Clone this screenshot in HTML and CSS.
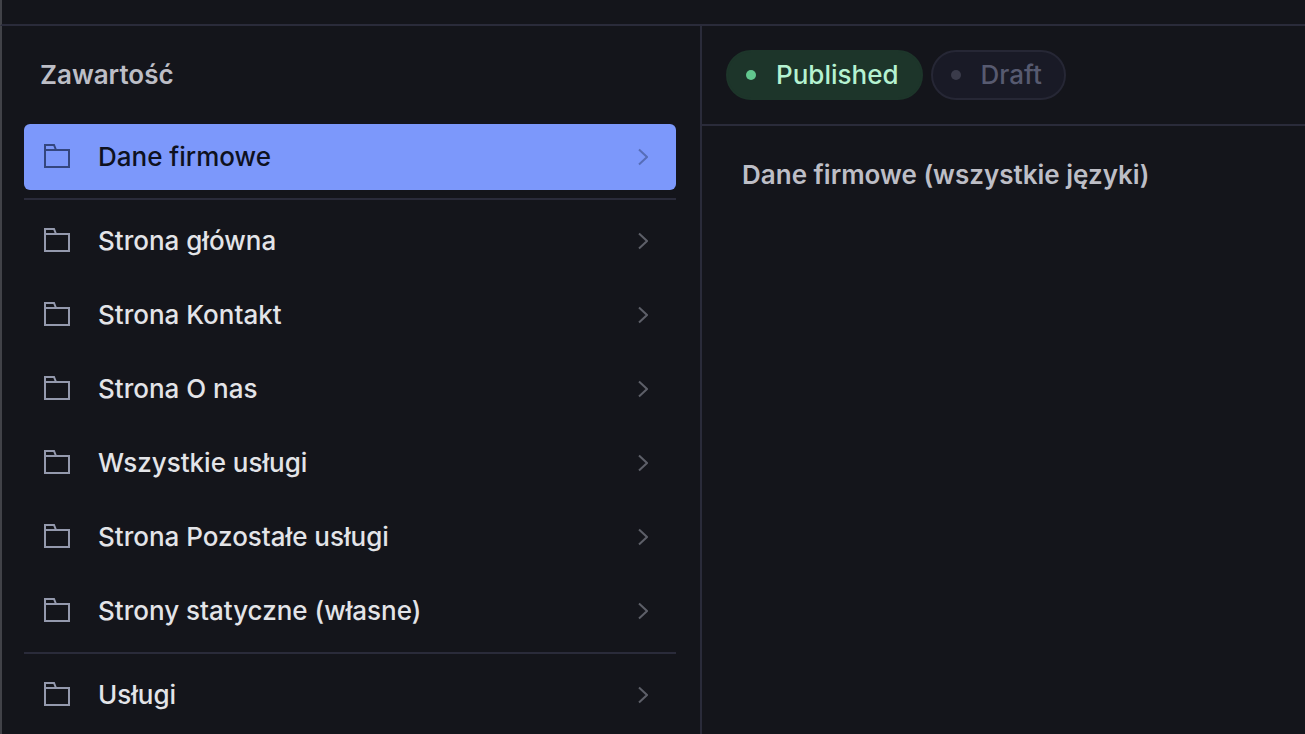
FILE: index.html
```html
<!DOCTYPE html>
<html lang="pl">
<head>
    <meta charset="UTF-8">
    <meta name="viewport" content="width=device-width, initial-scale=1.0">
    <title>Zawartość</title>
    <link rel="stylesheet" href="styles.css">
</head>
<body>
<svg class="sprite" aria-hidden="true">
    <symbol id="icon-folder" viewBox="0 0 26 26">
        <path d="M1 6V1H10L12 6M1 6H25V23H1Z"/>
    </symbol>
    <symbol id="icon-chevron" viewBox="0 0 12 18">
        <path d="M3 1.5L11 9L3 16.5"/>
    </symbol>
</svg>

<header class="topbar"></header>

<div class="panes">
    <!-- lista treści -->
    <nav class="pane pane-list" aria-labelledby="listTitle">
        <h2 id="listTitle" class="pane-title">Zawartość</h2>
        <ul class="menu">
            <li><a class="item item-active" href="#dane-firmowe">
                <svg class="icon"><use href="#icon-folder"/></svg>
                <span class="label">Dane firmowe</span>
                <svg class="chevron"><use href="#icon-chevron"/></svg>
            </a></li>
            <li class="divider"></li>
            <li><a class="item" href="#strona-glowna">
                <svg class="icon"><use href="#icon-folder"/></svg>
                <span class="label">Strona główna</span>
                <svg class="chevron"><use href="#icon-chevron"/></svg>
            </a></li>
            <li><a class="item" href="#kontakt">
                <svg class="icon"><use href="#icon-folder"/></svg>
                <span class="label">Strona Kontakt</span>
                <svg class="chevron"><use href="#icon-chevron"/></svg>
            </a></li>
            <li><a class="item" href="#o-nas">
                <svg class="icon"><use href="#icon-folder"/></svg>
                <span class="label">Strona O nas</span>
                <svg class="chevron"><use href="#icon-chevron"/></svg>
            </a></li>
            <li><a class="item" href="#wszystkie-uslugi">
                <svg class="icon"><use href="#icon-folder"/></svg>
                <span class="label">Wszystkie usługi</span>
                <svg class="chevron"><use href="#icon-chevron"/></svg>
            </a></li>
            <li><a class="item" href="#pozostale-uslugi">
                <svg class="icon"><use href="#icon-folder"/></svg>
                <span class="label">Strona Pozostałe usługi</span>
                <svg class="chevron"><use href="#icon-chevron"/></svg>
            </a></li>
            <li><a class="item" href="#strony-statyczne">
                <svg class="icon"><use href="#icon-folder"/></svg>
                <span class="label">Strony statyczne (własne)</span>
                <svg class="chevron"><use href="#icon-chevron"/></svg>
            </a></li>
            <li class="divider"></li>
            <li><a class="item" href="#uslugi">
                <svg class="icon"><use href="#icon-folder"/></svg>
                <span class="label">Usługi</span>
                <svg class="chevron"><use href="#icon-chevron"/></svg>
            </a></li>
        </ul>
    </nav>

    <!-- dokument -->
    <main class="pane pane-document">
        <div class="perspectives">
            <button type="button" class="chip chip-published">Published</button>
            <button type="button" class="chip chip-draft" disabled>Draft</button>
        </div>
        <h1 class="document-title">Dane firmowe (wszystkie języki)</h1>
    </main>
</div>
</body>
</html>
```

FILE: styles.css
```css
* {
    box-sizing: border-box;
}
body {
    display: flex;
    flex-direction: column;
    min-height: 100vh;
    margin: 0;
    background-color: #14151b;
    color: #e3e4e8;
    font-family: Inter, sans-serif;
    font-size: 26px;
    font-weight: 500;
    line-height: 34px;
}
.sprite {
    display: none;
}
.topbar {
    height: 26px;
    border-left: 2px solid #414248;
    border-bottom: 2px solid #2a2b3a;
}
.panes {
    display: grid;
    grid-template-columns: 15fr 13fr;
    flex: 1;
    border-left: 2px solid #414248;
}
.pane-list {
    padding: 32px 24px 0 22px;
}
.pane-title, .document-title {
    margin: 0;
    color: #bdbec6;
    font-size: 26px;
    font-weight: 600;
}
.pane-title {
    padding: 0 16px;
}
.menu {
    display: flex;
    flex-direction: column;
    gap: 8px;
    margin: 32px 0 0;
    padding: 0;
    list-style: none;
}
.item {
    display: flex;
    align-items: center;
    padding: 16px 28px 16px 20px;
    border-radius: 6px;
    color: inherit;
    text-decoration: none;
}
.item-active {
    background-color: #7c98fb;
    color: #0e1120;
}
.icon, .chevron {
    flex: none;
    fill: none;
    stroke-width: 2;
}
.icon {
    width: 26px;
    height: 26px;
    stroke: #9499ad;
}
.chevron {
    width: 12px;
    height: 18px;
    stroke: #5d5f68;
}
.item-active .icon {
    stroke: #34467f;
}
.item-active .chevron {
    stroke: #566db8;
}
.label {
    flex: 1;
    margin-left: 28px;
}
.divider {
    height: 2px;
    background-color: #2a2b3a;
}
.pane-document {
    border-left: 2px solid #2a2b3a;
}
.perspectives {
    display: flex;
    gap: 8px;
    padding: 24px;
    border-bottom: 2px solid #2a2b3a;
}
.chip {
    display: flex;
    align-items: center;
    gap: 20px;
    padding: 6px 22px 6px 18px;
    border: 2px solid transparent;
    border-radius: 25px;
    font: inherit;
}
.chip::before {
    content: "";
    width: 10px;
    height: 10px;
    border-radius: 50%;
}
.chip-published {
    border-color: #1d352a;
    background-color: #1d352a;
    color: #b5f2d1;
}
.chip-published::before {
    background-color: #61c78e;
}
.chip-draft {
    border-color: #262735;
    background-color: #191a26;
    color: #575a70;
}
.chip-draft::before {
    background-color: #3a3b4a;
}
.document-title {
    padding: 32px 40px;
}
```
